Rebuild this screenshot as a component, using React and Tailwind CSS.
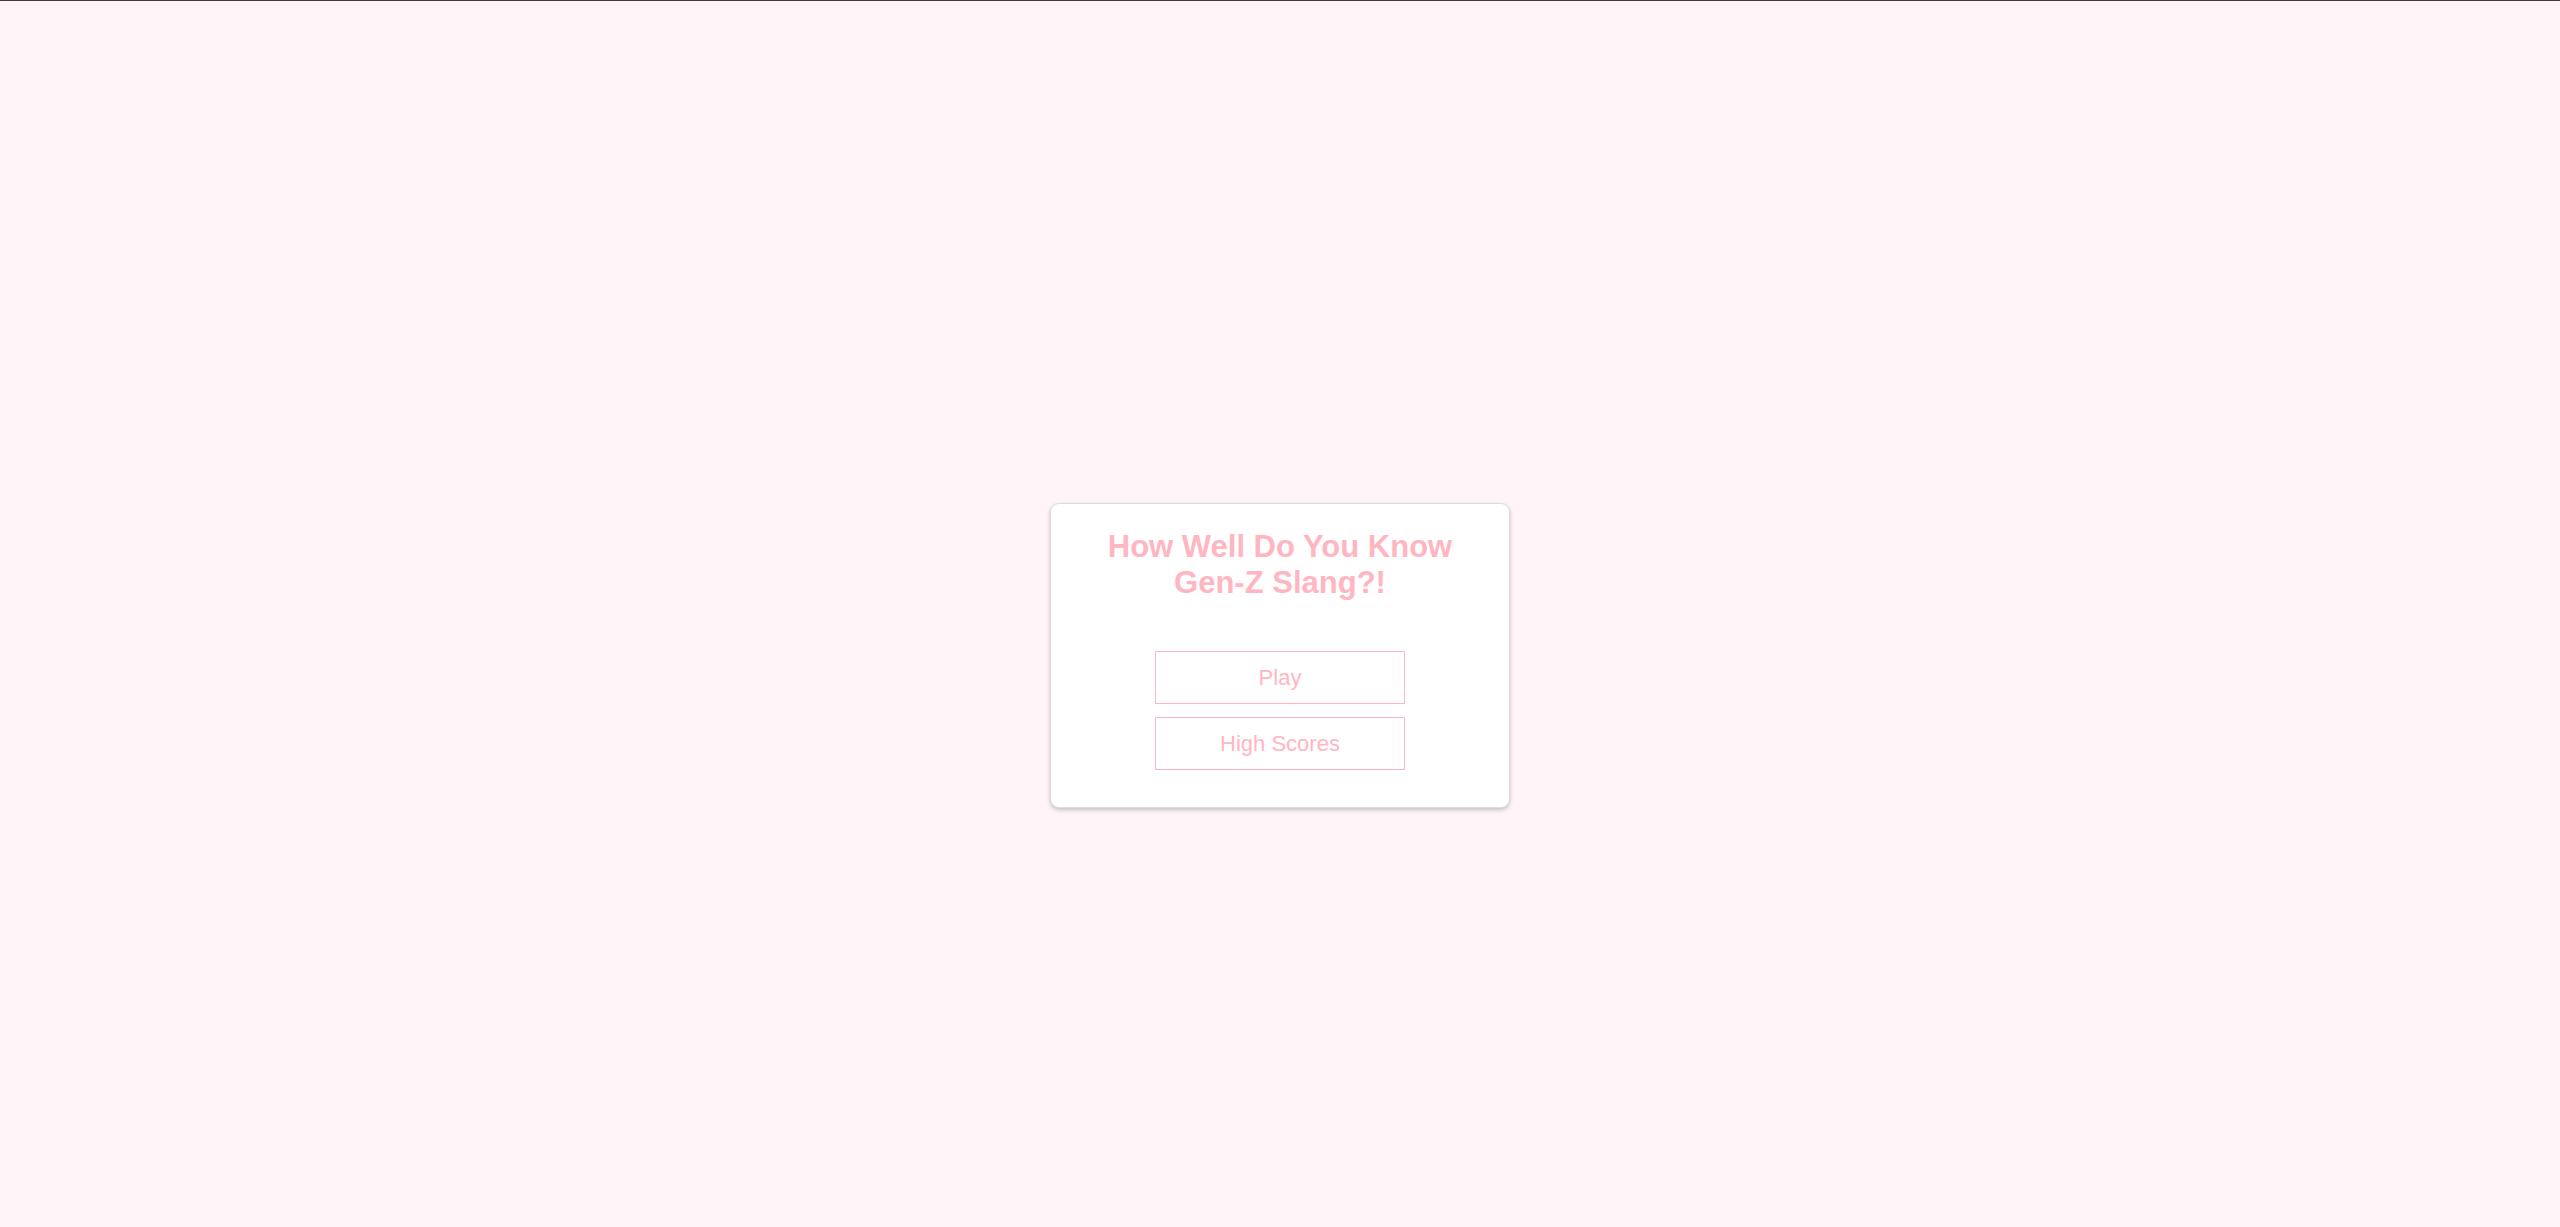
export default function App() {
  return (
    <div
      className="min-h-screen flex items-center justify-center bg-[#fff5f8] border-t border-[#3a3a3a] pt-[83px]"
      style={{ fontFamily: '"Liberation Sans", Arial, sans-serif' }}
    >
      <div className="w-[460px] h-[305px] bg-white border border-[#dcdcdc] rounded-[9px] shadow-[0_2px_4px_rgba(0,0,0,0.22)] flex flex-col items-center pt-[25px]">
        <h1 className="text-[31px] leading-[36px] font-bold text-[#ffb6c1] text-center">
          How Well Do You Know
          <br />
          Gen-Z Slang?!
        </h1>
        <div className="mt-[50px] flex flex-col gap-[13px]">
          <button className="w-[250px] h-[53px] border border-[#ffb6c1] bg-white text-[#ffb6c1] text-[22px] flex items-center justify-center">
            Play
          </button>
          <button className="w-[250px] h-[53px] border border-[#ffb6c1] bg-white text-[#ffb6c1] text-[22px] flex items-center justify-center">
            High Scores
          </button>
        </div>
      </div>
    </div>
  )
}
